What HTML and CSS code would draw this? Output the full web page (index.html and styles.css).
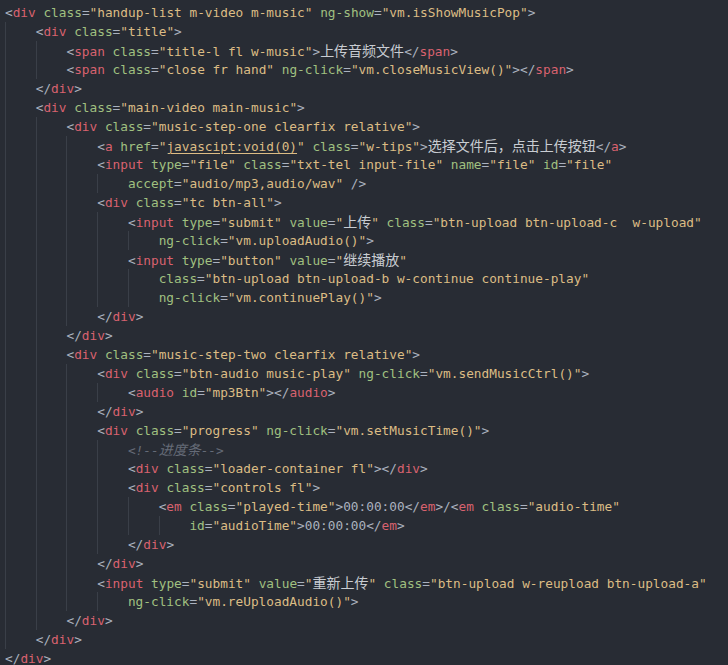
FILE: index.html
```html
<!DOCTYPE html>
<html lang="en">
<head>
    <meta charset="UTF-8">
    <title>music pop markup</title>
    <link rel="stylesheet" href="styles.css">
</head>
<body>
    <div class="code">
        <div class="ln">&lt;<span class="t">div</span> <span class="a">class</span>=<span class="s">"handup-list m-video m-music"</span> <span class="a">ng-show</span>=<span class="s">"vm.isShowMusicPop"</span>&gt;</div>
        <div class="ln"><i></i>&lt;<span class="t">div</span> <span class="a">class</span>=<span class="s">"title"</span>&gt;</div>
        <div class="ln"><i></i><i></i>&lt;<span class="t">span</span> <span class="a">class</span>=<span class="s">"title-l fl w-music"</span>&gt;<span class="z">上传音频文件</span>&lt;/<span class="t">span</span>&gt;</div>
        <div class="ln"><i></i><i></i>&lt;<span class="t">span</span> <span class="a">class</span>=<span class="s">"close fr hand"</span> <span class="a">ng-click</span>=<span class="s">"vm.closeMusicView()"</span>&gt;&lt;/<span class="t">span</span>&gt;</div>
        <div class="ln"><i></i>&lt;/<span class="t">div</span>&gt;</div>
        <div class="ln"><i></i>&lt;<span class="t">div</span> <span class="a">class</span>=<span class="s">"main-video main-music"</span>&gt;</div>
        <div class="ln"><i></i><i></i>&lt;<span class="t">div</span> <span class="a">class</span>=<span class="s">"music-step-one clearfix relative"</span>&gt;</div>
        <div class="ln"><i></i><i></i><i></i>&lt;<span class="t">a</span> <span class="a">href</span>=<span class="s">"<span class="u">javascipt:void(0)</span>"</span> <span class="a">class</span>=<span class="s">"w-tips"</span>&gt;<span class="z">选择文件后，点击上传按钮</span>&lt;/<span class="t">a</span>&gt;</div>
        <div class="ln"><i></i><i></i><i></i>&lt;<span class="t">input</span> <span class="a">type</span>=<span class="s">"file"</span> <span class="a">class</span>=<span class="s">"txt-tel input-file"</span> <span class="a">name</span>=<span class="s">"file"</span> <span class="a">id</span>=<span class="s">"file"</span></div>
        <div class="ln"><i></i><i></i><i></i><i></i><span class="a">accept</span>=<span class="s">"audio/mp3,audio/wav"</span> /&gt;</div>
        <div class="ln"><i></i><i></i><i></i>&lt;<span class="t">div</span> <span class="a">class</span>=<span class="s">"tc btn-all"</span>&gt;</div>
        <div class="ln"><i></i><i></i><i></i><i></i>&lt;<span class="t">input</span> <span class="a">type</span>=<span class="s">"submit"</span> <span class="a">value</span>=<span class="s">"<span class="z">上传</span>"</span> <span class="a">class</span>=<span class="s">"btn-upload btn-upload-c  w-upload"</span></div>
        <div class="ln"><i></i><i></i><i></i><i></i><i></i><span class="a">ng-click</span>=<span class="s">"vm.uploadAudio()"</span>&gt;</div>
        <div class="ln"><i></i><i></i><i></i><i></i>&lt;<span class="t">input</span> <span class="a">type</span>=<span class="s">"button"</span> <span class="a">value</span>=<span class="s">"<span class="z">继续播放</span>"</span></div>
        <div class="ln"><i></i><i></i><i></i><i></i><i></i><span class="a">class</span>=<span class="s">"btn-upload btn-upload-b w-continue continue-play"</span></div>
        <div class="ln"><i></i><i></i><i></i><i></i><i></i><span class="a">ng-click</span>=<span class="s">"vm.continuePlay()"</span>&gt;</div>
        <div class="ln"><i></i><i></i><i></i>&lt;/<span class="t">div</span>&gt;</div>
        <div class="ln"><i></i><i></i>&lt;/<span class="t">div</span>&gt;</div>
        <div class="ln"><i></i><i></i>&lt;<span class="t">div</span> <span class="a">class</span>=<span class="s">"music-step-two clearfix relative"</span>&gt;</div>
        <div class="ln"><i></i><i></i><i></i>&lt;<span class="t">div</span> <span class="a">class</span>=<span class="s">"btn-audio music-play"</span> <span class="a">ng-click</span>=<span class="s">"vm.sendMusicCtrl()"</span>&gt;</div>
        <div class="ln"><i></i><i></i><i></i><i></i>&lt;<span class="t">audio</span> <span class="a">id</span>=<span class="s">"mp3Btn"</span>&gt;&lt;/<span class="t">audio</span>&gt;</div>
        <div class="ln"><i></i><i></i><i></i>&lt;/<span class="t">div</span>&gt;</div>
        <div class="ln"><i></i><i></i><i></i>&lt;<span class="t">div</span> <span class="a">class</span>=<span class="s">"progress"</span> <span class="a">ng-click</span>=<span class="s">"vm.setMusicTime()"</span>&gt;</div>
        <div class="ln"><i></i><i></i><i></i><i></i><span class="c">&lt;!--<span class="z">进度条</span>--&gt;</span></div>
        <div class="ln"><i></i><i></i><i></i><i></i>&lt;<span class="t">div</span> <span class="a">class</span>=<span class="s">"loader-container fl"</span>&gt;&lt;/<span class="t">div</span>&gt;</div>
        <div class="ln"><i></i><i></i><i></i><i></i>&lt;<span class="t">div</span> <span class="a">class</span>=<span class="s">"controls fl"</span>&gt;</div>
        <div class="ln"><i></i><i></i><i></i><i></i><i></i>&lt;<span class="t">em</span> <span class="a">class</span>=<span class="s">"played-time"</span>&gt;00:00:00&lt;/<span class="t">em</span>&gt;/&lt;<span class="t">em</span> <span class="a">class</span>=<span class="s">"audio-time"</span></div>
        <div class="ln"><i></i><i></i><i></i><i></i><i></i><i></i><span class="a">id</span>=<span class="s">"audioTime"</span>&gt;00:00:00&lt;/<span class="t">em</span>&gt;</div>
        <div class="ln"><i></i><i></i><i></i><i></i>&lt;/<span class="t">div</span>&gt;</div>
        <div class="ln"><i></i><i></i><i></i>&lt;/<span class="t">div</span>&gt;</div>
        <div class="ln"><i></i><i></i><i></i>&lt;<span class="t">input</span> <span class="a">type</span>=<span class="s">"submit"</span> <span class="a">value</span>=<span class="s">"<span class="z">重新上传</span>"</span> <span class="a">class</span>=<span class="s">"btn-upload w-reupload btn-upload-a"</span></div>
        <div class="ln"><i></i><i></i><i></i><i></i><span class="a">ng-click</span>=<span class="s">"vm.reUploadAudio()"</span>&gt;</div>
        <div class="ln"><i></i><i></i>&lt;/<span class="t">div</span>&gt;</div>
        <div class="ln"><i></i>&lt;/<span class="t">div</span>&gt;</div>
        <div class="ln">&lt;/<span class="t">div</span>&gt;</div>
    </div>
</body>
</html>
```

FILE: styles.css
```css
body {
    margin: 0;
    background-color: #282c34;
}
.code {
    padding: 3px 0 0 5px;
    font-family: "DejaVu Sans Mono", monospace;
    font-size: 12.77px;
    line-height: 19px;
    color: #abb2bf;
}
.ln {
    height: 19px;
    white-space: pre;
    overflow: hidden;
}
.ln i {
    display: inline-block;
    width: 4ch;
    height: 19px;
    vertical-align: top;
    border-left: 1px solid #3a3f48;
    box-sizing: border-box;
}
.t {
    color: #d9626f;
}
.a {
    color: #a0c080;
}
.s {
    color: #dcbc84;
}
.z {
    font-family: "Noto Sans CJK SC", sans-serif;
    font-size: 14px;
    color: #c8ccd2;
}
.c,
.c .z {
    color: #656b77;
    font-style: italic;
}
.u {
    text-decoration: underline;
    text-underline-offset: 2px;
}
```
